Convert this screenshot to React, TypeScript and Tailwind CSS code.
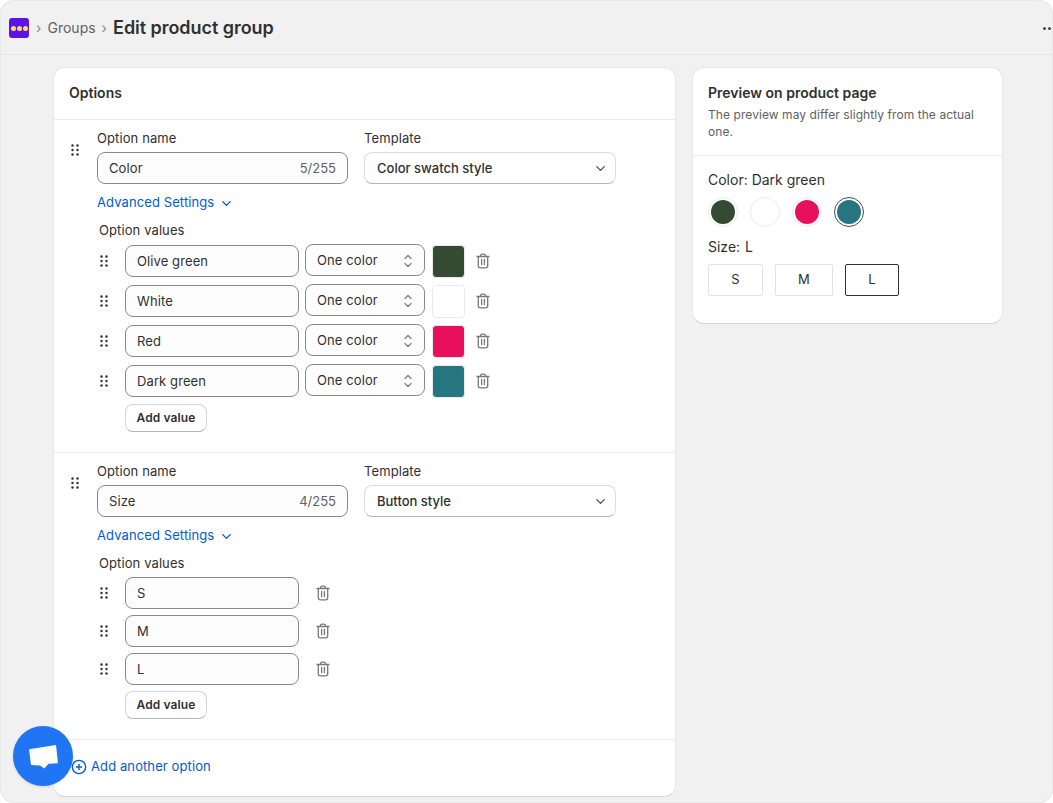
import { ChevronDown, CirclePlus } from 'lucide-react';

function DragHandle() {
  return (
    <svg width="8" height="12" viewBox="0 0 8 12" className="shrink-0 text-[#303030]" fill="currentColor">
      <circle cx="1.5" cy="1.5" r="1.2" />
      <circle cx="6.5" cy="1.5" r="1.2" />
      <circle cx="1.5" cy="6" r="1.2" />
      <circle cx="6.5" cy="6" r="1.2" />
      <circle cx="1.5" cy="10.5" r="1.2" />
      <circle cx="6.5" cy="10.5" r="1.2" />
    </svg>
  );
}

function TrashIcon() {
  return (
    <svg width="14" height="16" viewBox="0 0 14 16" fill="none" stroke="#7a7a7a" strokeWidth="1.3" strokeLinecap="round" strokeLinejoin="round" className="shrink-0">
      <path d="M1 3.5h12" />
      <path d="M4.6 3.3V2.6c0-.9.6-1.5 1.5-1.5h1.8c.9 0 1.5.6 1.5 1.5v.7" />
      <path d="M2.3 3.5v9.2c0 1.2.9 2.1 2.1 2.1h5.2c1.2 0 2.1-.9 2.1-2.1V3.5" />
      <path d="M5.6 6.5v5.2M8.4 6.5v5.2" />
    </svg>
  );
}

function UpDownIcon() {
  return (
    <svg width="10" height="14" viewBox="0 0 10 14" fill="none" stroke="#7a7a7a" strokeWidth="1.2" strokeLinecap="round" strokeLinejoin="round" className="shrink-0">
      <path d="M2 4.5 5 1.5 8 4.5" />
      <path d="M2 9.5 5 12.5 8 9.5" />
    </svg>
  );
}

function TextBox({ value, width, counter }: { value: string; width: string; counter?: string }) {
  return (
    <div className={`flex h-8 ${width} shrink-0 items-center justify-between rounded-lg border border-[#8a8a8a] bg-[#fdfdfd] px-[11px] pt-px text-[13px] text-[#303030]`}>
      <span>{value}</span>
      {counter ? <span className="tracking-normal text-[#616161]">{counter}</span> : null}
    </div>
  );
}

function AdvancedLink() {
  return (
    <div className="mt-[9px] flex h-5 items-center gap-[5px] text-[13px] text-[#005bd3]">
      <span>Advanced Settings</span>
      <ChevronDown size={15} strokeWidth={2.2} />
    </div>
  );
}

function AddValue() {
  return (
    <div className="flex h-7 w-[82px] items-center justify-center rounded-lg border border-[#d4d4d4] border-b-[#b5b5b5] bg-white text-xs font-semibold text-[#303030]">
      Add value
    </div>
  );
}

function ColorRow({ name, color }: { name: string; color: string }) {
  return (
    <div className="flex h-8 items-center">
      <div className="flex w-[26px] shrink-0 pl-px">
        <DragHandle />
      </div>
      <TextBox value={name} width="w-[174px]" />
      <div className="mb-[2px] ml-[6px] flex h-8 w-[120px] shrink-0 items-center justify-between rounded-lg border border-[#8a8a8a] bg-[#fdfdfd] pl-[11px] pr-[11px] pt-px text-[13px] text-[#303030]">
        <span>One color</span>
        <UpDownIcon />
      </div>
      <div
        className="ml-[7px] h-[33px] w-[33px] shrink-0 rounded-[4px] border border-[#ebebeb]"
        style={{ backgroundColor: color }}
      />
      <div className="ml-[11px]">
        <TrashIcon />
      </div>
    </div>
  );
}

function SizeRow({ name }: { name: string }) {
  return (
    <div className="flex h-8 items-center">
      <div className="flex w-[26px] shrink-0 pl-px">
        <DragHandle />
      </div>
      <TextBox value={name} width="w-[174px]" />
      <div className="ml-[17px]">
        <TrashIcon />
      </div>
    </div>
  );
}

function OptionHead({ name, counter, template }: { name: string; counter: string; template: string }) {
  return (
    <div className="flex">
      <div className="w-[43px] shrink-0 pl-[17px] pt-[16px]">
        <DragHandle />
      </div>
      <div>
        <div className="flex gap-4">
          <div>
            <div className="mb-1 h-5 text-[13px] leading-5 text-[#303030]">Option name</div>
            <TextBox value={name} counter={counter} width="w-[251px]" />
          </div>
          <div>
            <div className="mb-1 h-5 text-[13px] leading-5 text-[#303030]">Template</div>
            <div className="flex h-8 w-[252px] items-center justify-between rounded-lg border border-[#dcdcdc] border-b-[#b5b5b5] bg-white pl-3 pr-[7px] pt-px text-[13px] font-medium tracking-normal text-[#303030]">
              <span>{template}</span>
              <ChevronDown size={15} strokeWidth={2} className="text-[#4a4a4a]" />
            </div>
          </div>
        </div>
        <AdvancedLink />
      </div>
    </div>
  );
}

export default function App() {
  return (
    <div className="relative h-[803px] w-[1053px] overflow-hidden rounded-[14px] bg-[#f1f1f1] font-['Inter',sans-serif] tracking-[0.1px] text-[#303030] shadow-[inset_0_0_0_1px_#e8e8e8]">
      <header className="flex h-[55px] items-center justify-between border-b border-[#e6e6e6] pl-[9px] pt-[2px]">
        <div className="flex items-center">
          <div className="flex h-5 w-5 items-center justify-center gap-px rounded-[3px] bg-[#5c14e6]">
            <span className="h-[5px] w-[5px] rounded-full bg-[#ffe14d]" />
            <span className="h-[5px] w-[5px] rounded-full bg-[#ffe14d]" />
            <span className="h-[5px] w-[5px] rounded-full bg-[#ffe14d]" />
          </div>
          <span className="ml-[7px] text-sm text-[#8a8a8a]">›</span>
          <span className="ml-[6px] text-sm tracking-normal text-[#616161]">Groups</span>
          <span className="ml-[6px] text-sm text-[#8a8a8a]">›</span>
          <span className="ml-[6px] text-lg font-semibold leading-none tracking-[-0.05px] text-[#303030]">Edit product group</span>
        </div>
        <div className="mr-[2px] flex gap-[2px]">
          <span className="h-[3px] w-[3px] rounded-full bg-[#4a4a4a]" />
          <span className="h-[3px] w-[3px] rounded-full bg-[#4a4a4a]" />
        </div>
      </header>

      <main className="flex items-start gap-4 pl-[53px] pt-[12px]">
        <section className="w-[623px] shrink-0 rounded-xl border border-[#e6e6e6] border-b-[#d4d4d4] bg-white">
          <div className="flex h-[52px] items-center border-b border-[#ebebeb] pb-[2px] pl-[15px] text-sm font-semibold tracking-normal">Options</div>

          <div className="h-[333px] border-b border-[#ebebeb] pt-2">
            <OptionHead name="Color" counter="5/255" template="Color swatch style" />
            <div className="ml-[45px] mt-[7px]">
              <div className="h-5 text-[13px] leading-5">Option values</div>
              <div className="mt-[5px] flex flex-col gap-2">
                <ColorRow name="Olive green" color="#354a33" />
                <ColorRow name="White" color="#ffffff" />
                <ColorRow name="Red" color="#e8105c" />
                <ColorRow name="Dark green" color="#257680" />
              </div>
              <div className="ml-[26px] mt-[7px]">
                <AddValue />
              </div>
            </div>
          </div>

          <div className="h-[287px] border-b border-[#ebebeb] pt-2">
            <OptionHead name="Size" counter="4/255" template="Button style" />
            <div className="ml-[45px] mt-[7px]">
              <div className="h-5 text-[13px] leading-5">Option values</div>
              <div className="mt-1 flex flex-col gap-[6px]">
                <SizeRow name="S" />
                <SizeRow name="M" />
                <SizeRow name="L" />
              </div>
              <div className="ml-[26px] mt-[6px]">
                <AddValue />
              </div>
            </div>
          </div>

          <div className="flex h-[56px] items-center gap-[4px] pb-[2px] pl-[17px] text-[13px] text-[#005bd3]">
            <CirclePlus size={16} strokeWidth={2} />
            <span>Add another option</span>
          </div>
        </section>

        <aside className="w-[311px] shrink-0 rounded-xl border border-[#e6e6e6] border-b-[#d4d4d4] bg-white">
          <div className="h-[88px] border-b border-[#ebebeb] pl-[15px] pr-4 pt-[15px]">
            <div className="text-sm font-semibold leading-5 tracking-normal">Preview on product page</div>
            <p className="mt-[3px] text-xs leading-[17px] tracking-[0.07px] text-[#616161]">The preview may differ slightly from the actual one.</p>
          </div>
          <div className="h-[167px] pl-[15px] pt-[14px]">
            <div className="text-sm leading-5 tracking-normal">Color: Dark green</div>
            <div className="mt-[7px] flex gap-[12px]">
              {['#354a33', '#ffffff', '#e8105c', '#257680'].map((color, index) => (
                <div
                  key={color}
                  className={
                    index === 3
                      ? 'flex h-[30px] w-[30px] items-center justify-center rounded-full border border-[#4a4a4a]'
                      : 'flex h-[30px] w-[30px] items-center justify-center rounded-full border border-[#ebebeb]'
                  }
                >
                  <span className="h-6 w-6 rounded-full" style={{ backgroundColor: color }} />
                </div>
              ))}
            </div>
            <div className="mt-[10px] flex gap-[5px] text-sm leading-5 tracking-normal">
              <span>Size:</span>
              <span>L</span>
            </div>
            <div className="mt-[7px] flex gap-3 text-[13px]">
              <div className="flex h-8 w-[55px] items-center justify-center rounded-[2px] border border-[#e3e3e3]">S</div>
              <div className="flex h-8 w-[58px] items-center justify-center rounded-[2px] border border-[#e3e3e3]">M</div>
              <div className="flex h-8 w-[54px] items-center justify-center rounded-[2px] border border-[#303030]">L</div>
            </div>
          </div>
        </aside>
      </main>

      <div className="absolute left-[13px] top-[726px] flex h-[60px] w-[60px] items-center justify-center rounded-full bg-[#1f75f3] shadow-sm">
        <svg width="29" height="25" viewBox="0 0 29 25" fill="#ffffff" className="mt-[2px]">
          <path d="M0 4.3 27 0 29 18.3 19.5 18.8 15.3 23.5 11 20.5 2 20Z" />
        </svg>
      </div>
    </div>
  );
}
